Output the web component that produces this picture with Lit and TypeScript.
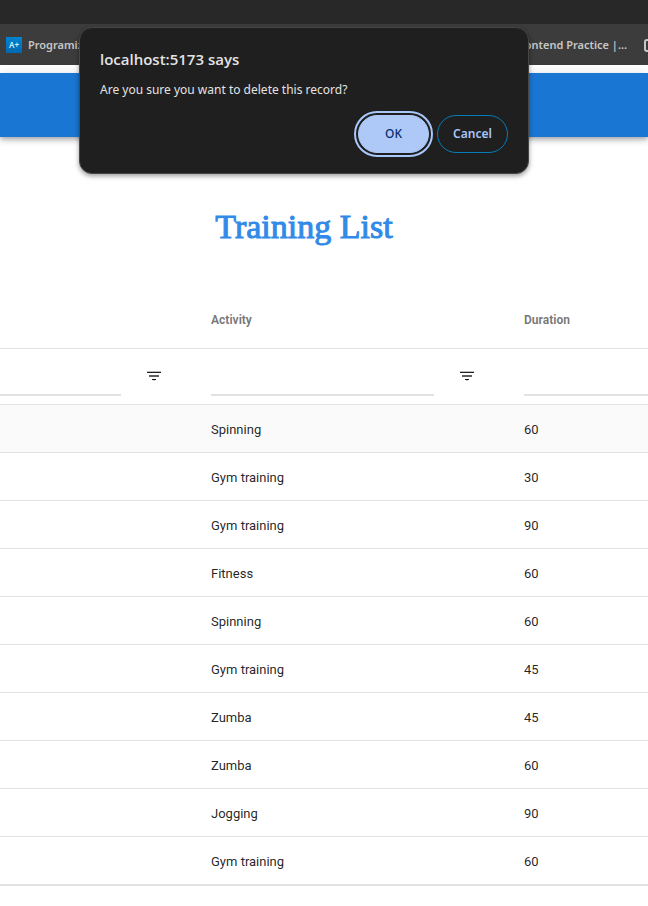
import { LitElement, html, css } from "lit";
import { customElement } from "lit/decorators.js";

const trainings: Array<[string, number]> = [
  ["Spinning", 60],
  ["Gym training", 30],
  ["Gym training", 90],
  ["Fitness", 60],
  ["Spinning", 60],
  ["Gym training", 45],
  ["Zumba", 45],
  ["Zumba", 60],
  ["Jogging", 90],
  ["Gym training", 60],
];

@customElement("bookmark-bar")
class BookmarkBar extends LitElement {
  static styles = css`
    :host {
      display: block;
      font: 600 11px/16px "Noto Sans", "Open Sans", sans-serif;
      color: #c7c7c7;
    }
    .toolbar {
      height: 24px;
      background: #282828;
    }
    .bar {
      display: flex;
      align-items: center;
      height: 41px;
      padding-left: 6px;
      background: #3c3c3c;
      overflow: hidden;
      white-space: nowrap;
    }
    a {
      display: flex;
      align-items: center;
      gap: 6px;
      color: inherit;
      text-decoration: none;
    }
    .last {
      margin-left: auto;
    }
    .logo {
      width: 16px;
      height: 16px;
      background: linear-gradient(#0284d0, #0068b0);
      color: #d9efff;
      font-size: 8px;
      text-align: center;
    }
    .folder {
      width: 4px;
      height: 16px;
      margin-left: 17px;
    }
  `;

  render() {
    return html`
      <div class="toolbar"></div>
      <nav class="bar" aria-label="Bookmarks">
        <a href="#programiz"><span class="logo">A+</span>Programiz</a>
        <a class="last" href="#practice">Frontend Practice |...</a>
        <svg class="folder" viewBox="0 0 4 16" fill="none" stroke="#c7c7c7" stroke-width="2" aria-hidden="true">
          <path d="M5 3H3Q1 3 1 5v7q0 2 2 2h2" />
        </svg>
      </nav>
    `;
  }
}

@customElement("confirm-dialog")
class ConfirmDialog extends LitElement {
  static styles = css`
    :host {
      display: block;
      box-sizing: border-box;
      width: 450px;
      padding: 20px;
      border: 1px solid #464646;
      border-radius: 13px;
      background: #1f1f1f;
      color: #e3e3e3;
      box-shadow: 0 2px 5px rgba(0, 0, 0, 0.4);
      font: 12px/20px "Noto Sans", "Open Sans", sans-serif;
    }
    h2 {
      margin: 0 0 10px;
      font: 600 15px/22px "Open Sans", "Noto Sans", sans-serif;
    }
    p {
      margin: 0;
    }
    .actions {
      display: flex;
      justify-content: flex-end;
      gap: 8px;
      margin-top: 15px;
    }
    button {
      box-sizing: border-box;
      width: 71px;
      height: 38px;
      padding: 0;
      border: 1px solid #047db7;
      border-radius: 19px;
      background: transparent;
      color: #a8c7fa;
      font: 600 12px/16px "Noto Sans", "Open Sans", sans-serif;
    }
    .ok {
      border-color: #aec9f7;
      background: #aec9f7;
      color: #062e6f;
      font-weight: 500;
      outline: 2px solid #a8c7fa;
      outline-offset: 2px;
    }
  `;

  render() {
    return html`
      <div role="alertdialog" aria-labelledby="title" aria-describedby="message">
        <h2 id="title">localhost:5173 says</h2>
        <p id="message">Are you sure you want to delete this record?</p>
        <div class="actions">
          <button class="ok">OK</button>
          <button>Cancel</button>
        </div>
      </div>
    `;
  }
}

@customElement("training-table")
class TrainingTable extends LitElement {
  static styles = css`
    :host {
      display: block;
      font: 13px/20px Roboto, sans-serif;
      color: rgba(0, 0, 0, 0.87);
    }
    table {
      width: 100%;
      table-layout: fixed;
      border-collapse: separate;
      border-spacing: 0;
      border-bottom: 1px solid #e2e2e2;
    }
    .date {
      width: 187px;
    }
    .activity {
      width: 313px;
    }
    th,
    td {
      box-sizing: border-box;
      padding: 0 0 0 24px;
      border-bottom: 1px solid #e2e2e2;
      text-align: left;
      vertical-align: middle;
    }
    th {
      height: 57px;
      color: rgba(0, 0, 0, 0.54);
      font-size: 12px;
      font-weight: 700;
    }
    .filters td {
      height: 56px;
      padding-bottom: 2px;
    }
    .filters td:first-child {
      padding-left: 0;
    }
    tbody td {
      height: 48px;
      padding-top: 2px;
    }
    tbody tr:first-child {
      background: #fafafa;
    }
    .filter {
      display: flex;
      align-items: center;
    }
    input {
      box-sizing: border-box;
      flex: 1;
      min-width: 0;
      height: 40px;
      padding: 0;
      border: 0;
      border-bottom: 2px solid #e2e2e2;
      border-radius: 0;
      background: transparent;
      font: inherit;
      outline: none;
    }
    button {
      display: flex;
      width: 18px;
      height: 18px;
      margin: 0 24px;
      padding: 0;
      border: 0;
      background: none;
    }
  `;

  filter(label: string, menu: boolean) {
    return html`
      <div class="filter">
        <input type="text" aria-label="${label} filter" />
        ${menu
          ? html`<button aria-label="Open ${label} filter menu">
              <svg width="18" height="18" viewBox="0 0 18 18" aria-hidden="true">
                <path fill="#bbb" d="M2 4h14v1H2z" />
                <path fill="#222" d="M2 5h14v1H2z" />
                <path fill="#606060" d="M4 8h10v2H4z" />
                <path fill="#111" d="M7 12h4v1H7z" />
                <path fill="#ccc" d="M8 13h2v1H8z" />
              </svg>
            </button>`
          : ""}
      </div>
    `;
  }

  render() {
    return html`
      <table>
        <colgroup>
          <col class="date" />
          <col class="activity" />
          <col />
        </colgroup>
        <thead>
          <tr>
            <th></th>
            <th scope="col">Activity</th>
            <th scope="col">Duration</th>
          </tr>
          <tr class="filters">
            <td>${this.filter("Date", true)}</td>
            <td>${this.filter("Activity", true)}</td>
            <td>${this.filter("Duration", false)}</td>
          </tr>
        </thead>
        <tbody>
          ${trainings.map(
            ([activity, minutes]) => html`<tr>
              <td></td>
              <td>${activity}</td>
              <td>${minutes}</td>
            </tr>`
          )}
        </tbody>
      </table>
    `;
  }
}

@customElement("app-root")
class AppRoot extends LitElement {
  static styles = css`
    :host {
      display: block;
      position: relative;
      min-height: 100vh;
      background: #fff;
      overflow: hidden;
    }
    .appbar {
      height: 64px;
      margin-top: 8px;
      background: #1976d2;
      box-shadow:
        0 2px 4px -1px rgba(0, 0, 0, 0.2),
        0 4px 5px rgba(0, 0, 0, 0.14),
        0 1px 10px rgba(0, 0, 0, 0.12);
    }
    h1 {
      margin: 70px 40px 45px 0;
      color: #318ae8;
      font: 400 34px/40px "Liberation Serif", serif;
      -webkit-text-stroke: 1px #318ae8;
      text-align: center;
    }
    .dialog {
      position: absolute;
      top: 27px;
      left: 79px;
    }
  `;

  render() {
    return html`
      <bookmark-bar></bookmark-bar>
      <header class="appbar"></header>
      <main>
        <h1>Training List</h1>
        <training-table></training-table>
      </main>
      <confirm-dialog class="dialog"></confirm-dialog>
    `;
  }
}
